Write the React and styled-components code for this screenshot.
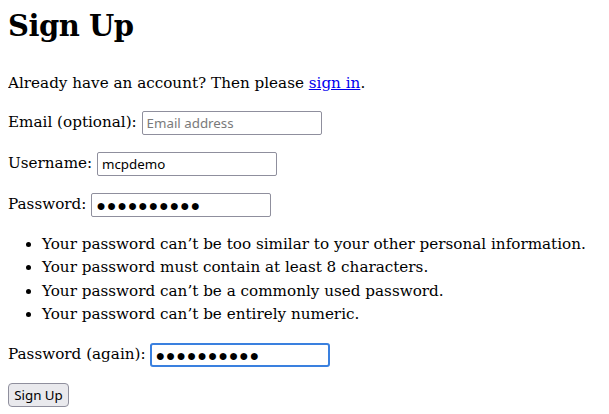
import React, { useEffect, useRef } from "react";
import styled, { createGlobalStyle } from "styled-components";

const GlobalStyle = createGlobalStyle`
  body {
    margin: 8px;
    font-family: "DejaVu Serif", "Liberation Serif", serif;
    font-size: 15.2px;
    color: #000;
    background: #fff;
  }
`;

const DOTS = "●●●●●●●●●●";

export default function App() {
  const againRef = useRef(null);

  useEffect(() => {
    const el = againRef.current;
    if (el) {
      el.focus();
      el.setSelectionRange(el.value.length, el.value.length);
    }
  }, []);

  return (
    <>
      <GlobalStyle />
      <Page>
        <Title>Sign Up</Title>
        <Intro>
          Already have an account? Then please <StyledLink href="#">sign in</StyledLink>.
        </Intro>
        <Form onSubmit={(e) => e.preventDefault()}>
          <FieldRow>
            <label htmlFor="email">Email (optional):</label>{" "}
            <TextInput id="email" type="email" placeholder="Email address" />
          </FieldRow>
          <FieldRow>
            <label htmlFor="username">Username:</label>{" "}
            <TextInput id="username" type="text" defaultValue="mcpdemo" />
          </FieldRow>
          <FieldRow>
            <label htmlFor="password1">Password:</label>{" "}
            <TextInput id="password1" type="text" defaultValue={DOTS} $masked />
          </FieldRow>
          <HelpList>
            <li>Your password can’t be too similar to your other personal information.</li>
            <li>Your password must contain at least 8 characters.</li>
            <li>Your password can’t be a commonly used password.</li>
            <li>Your password can’t be entirely numeric.</li>
          </HelpList>
          <FieldRow>
            <label htmlFor="password2">Password (again):</label>{" "}
            <TextInput
              id="password2"
              ref={againRef}
              type="text"
              defaultValue={DOTS}
              $masked
              $focused
            />
          </FieldRow>
          <SubmitButton type="submit">Sign Up</SubmitButton>
        </Form>
      </Page>
    </>
  );
}

const Page = styled.main`
  display: block;
`;

const Title = styled.h1`
  font-size: 29px;
  letter-spacing: -0.5px;
  line-height: 36px;
  font-weight: bold;
  margin: 0 0 28px;
`;

const Intro = styled.p`
  margin: 0;
  line-height: 22px;
`;

const StyledLink = styled.a`
  color: #0000ee;
  text-decoration: underline;
`;

const Form = styled.form`
  display: block;
`;

const FieldRow = styled.p`
  margin: 16px 0;
  line-height: 25px;
  height: 25px;
`;

const TextInput = styled.input`
  width: 180px;
  height: 24px;
  box-sizing: border-box;
  vertical-align: middle;
  font-family: "Noto Sans", "Open Sans", sans-serif;
  font-size: ${({ $masked }) => ($masked ? "16px" : "13.33px")};
  letter-spacing: ${({ $masked }) => ($masked ? "0.8px" : "normal")};
  color: #000;
  padding: ${({ $focused }) => ($focused ? "0 3px" : "1px 4px")};
  background: #fff;
  border: ${({ $focused }) => ($focused ? "2px solid #3a80df" : "1px solid #8f8f9d")};
  border-radius: ${({ $focused }) => ($focused ? "3px" : "2px")};
  outline: none;
  caret-color: #000;

  &::placeholder {
    color: #7a7a7a;
  }
`;

const HelpList = styled.ul`
  margin: 16px 0;
  padding-left: 34px;
  line-height: 23.3px;
`;

const SubmitButton = styled.button`
  display: block;
  width: 61px;
  height: 24px;
  padding: 0;
  font-family: "Noto Sans", "Open Sans", sans-serif;
  font-size: 13.33px;
  color: #000;
  background: #e9e9ed;
  border: 1px solid #8f8f9d;
  border-radius: 4px;
`;
